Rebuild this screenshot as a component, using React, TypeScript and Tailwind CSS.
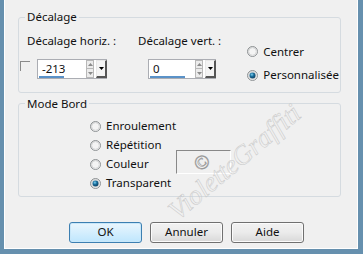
import React from "react";

function Radio({ checked }: { checked?: boolean }) {
  return (
    <svg width="11" height="11" viewBox="0 0 11 11" className="shrink-0">
      <defs>
        <linearGradient id="rg" x1="0" y1="0" x2="1" y2="1">
          <stop offset="0" stopColor="#d6d6d6" />
          <stop offset="1" stopColor="#ffffff" />
        </linearGradient>
        <radialGradient id="dot" cx="0.4" cy="0.35" r="0.7">
          <stop offset="0" stopColor="#7fd2f2" />
          <stop offset="0.45" stopColor="#1a6e9c" />
          <stop offset="1" stopColor="#0b3a5a" />
        </radialGradient>
      </defs>
      <circle cx="5.5" cy="5.5" r="5" fill="url(#rg)" stroke="#8e9294" strokeWidth="1" />
      <circle cx="5.5" cy="5.5" r="3.8" fill="#f4f4f4" stroke="#c4c6c8" strokeWidth="0.6" />
      {checked && <circle cx="5.5" cy="5.5" r="3" fill="url(#dot)" />}
    </svg>
  );
}

function RadioRow({ label, checked }: { label: string; checked?: boolean }) {
  return (
    <div className="flex h-[19px] items-center gap-[5px]">
      <Radio checked={checked} />
      <span>{label}</span>
    </div>
  );
}

function Spinner({ value, width, underline }: { value: string; width: string; underline: string }) {
  return (
    <div className={`flex h-[20px] ${width} items-stretch border border-[#abadb3] border-r-0 bg-white`}>
      <div className="relative flex flex-1 items-center pl-[4px]">
        <span className="leading-none">{value}</span>
        <div className={`absolute bottom-[0px] left-[1px] h-[2px] ${underline} bg-[#5a92c8]`} />
      </div>
      <div className="flex w-[8px] flex-col">
        <div className="flex h-[9px] items-center justify-center border border-[#b8b8b8] bg-[#ececec]">
          <svg width="5" height="3" viewBox="0 0 5 3"><path d="M0 3 L2.5 0 L5 3 Z" fill="#8a8a8a" /></svg>
        </div>
        <div className="flex h-[9px] items-center justify-center border border-t-0 border-[#b8b8b8] bg-[#ececec]">
          <svg width="5" height="3" viewBox="0 0 5 3"><path d="M0 0 L2.5 3 L5 0 Z" fill="#8a8a8a" /></svg>
        </div>
      </div>
      <div className="ml-[2px] flex w-[11px] items-center justify-center border-l border-t border-l-[#e8e8e8] border-t-[#e8e8e8] border-r-2 border-b-2 border-r-[#555] border-b-[#555] bg-[#f4f4f4]">
        <svg width="5" height="3" viewBox="0 0 5 3"><path d="M0 0 L2.5 3 L5 0 Z" fill="#000" /></svg>
      </div>
    </div>
  );
}

function Btn({ label, primary }: { label: string; primary?: boolean }) {
  return (
    <div
      className={
        primary
          ? "flex h-[21px] w-[73px] items-center justify-center rounded-[3px] border border-[#3c7fb1] bg-gradient-to-b from-[#eaf6fd] to-[#bee6fd] shadow-[inset_0_0_0_1px_#c8e7f9]"
          : "flex h-[21px] w-[73px] items-center justify-center rounded-[3px] border border-[#707070] bg-gradient-to-b from-[#f2f2f2] via-[#ebebeb] to-[#d8d8d8] shadow-[inset_0_0_0_1px_#fbfbfb]"
      }
    >
      {label}
    </div>
  );
}

export default function App() {
  return (
    <div
      className="relative h-[254px] w-[363px] overflow-hidden whitespace-nowrap bg-[#6690ae] pl-[4px] pr-[5px] pb-[5px] text-[11.5px] leading-[16px] text-[#111]"
      style={{ fontFamily: '"Noto Sans", "Open Sans", sans-serif' }}
    >
      <div className="flex h-full flex-col border-x border-b border-white bg-[#f0f0f0]">
        <fieldset className="ml-[13px] mt-[9px] w-[323px] rounded-[3px] border border-[#d5dbe0] p-0 pb-[7px]">
          <legend className="ml-[6px] px-[2px] leading-[16px]">Décalage</legend>
          <div className="flex">
            <div className="flex flex-col">
              <div className="mt-[8px] flex">
                <span className="ml-[8px] w-[111px]">Décalage horiz. :</span>
                <span>Décalage vert. :</span>
              </div>
              <div className="mt-[10px] flex items-start">
                <div className="ml-[1px] mt-[2px] h-[10px] w-[10px] border-l border-t border-[#8a8a8a]" />
                <div className="ml-[7px]">
                  <Spinner value="-213" width="w-[70px]" underline="w-[25px]" />
                </div>
                <div className="ml-[41px]">
                  <Spinner value="0" width="w-[68px]" underline="w-[35px]" />
                </div>
              </div>
            </div>
            <div className="ml-[26px] mt-[17px] flex flex-col gap-[4.5px]">
              <RadioRow label="Centrer" />
              <RadioRow label="Personnalisée" checked />
            </div>
          </div>
        </fieldset>
        <fieldset className="ml-[13px] mt-[3px] w-[323px] rounded-[3px] border border-[#d5dbe0] p-0 pb-[3px]">
          <legend className="ml-[6px] px-[2px] leading-[16px]">Mode Bord</legend>
          <div className="flex">
            <div className="ml-[71px] mt-[5px] flex w-[86px] flex-col">
              <RadioRow label="Enroulement" />
              <RadioRow label="Répétition" />
              <RadioRow label="Couleur" />
              <RadioRow label="Transparent" checked />
            </div>
            <div className="mt-[38px] h-[24px] w-[55px] border-l border-t border-[#888] border-r-white border-b-white border-r border-b" />
          </div>
        </fieldset>
        <div className="ml-[64px] mt-[25px] flex gap-[8px]">
          <Btn label="OK" primary />
          <Btn label="Annuler" />
          <Btn label="Aide" />
        </div>
      </div>
      <div
        className="pointer-events-none absolute left-[172px] top-[206px] origin-left -rotate-[40deg] whitespace-nowrap text-[27px] italic text-transparent [-webkit-text-stroke:0.5px_#c8c8c8]"
        style={{ fontFamily: '"Liberation Serif", serif' }}
      >
        VioletteGraffiti
      </div>
      <div
        className="pointer-events-none absolute left-[194px] top-[152px] -rotate-[40deg] text-[20px] leading-[20px] text-transparent [-webkit-text-stroke:0.6px_#9a9a9a]"
        style={{ fontFamily: '"Liberation Serif", serif' }}
      >
        ©
      </div>
    </div>
  );
}
